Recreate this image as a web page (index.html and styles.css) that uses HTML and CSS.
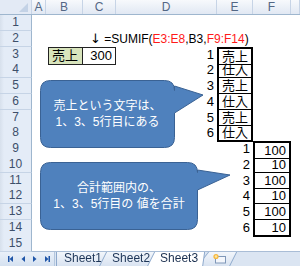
FILE: index.html
```html
<!DOCTYPE html>
<html>
<head>
<meta charset="utf-8">
<title>SUMIF</title>
<link rel="stylesheet" href="styles.css">
</head>
<body>
<div class="sheet">
  <div class="row head">
    <div class="corner"></div><div>A</div><div>B</div><div>C</div><div>D</div><div>E</div><div>F</div><div></div>
  </div>
  <div class="row"><div class="rh">1</div><div></div><div></div><div></div><div></div><div></div><div></div><div></div></div>
  <div class="row"><div class="rh">2</div><div></div><div></div>
    <div class="c formula"><span class="arrow">&#x2193;</span> =SUMIF(<span class="red">E3:E8</span>,B3,<span class="red">F9:F14</span>)</div>
    <div></div><div></div><div></div><div></div></div>
  <div class="row"><div class="rh">3</div><div></div><div class="c key">売上</div><div class="c r val">300</div><div class="c r">1</div><div class="c eb top">売上</div><div></div><div></div></div>
  <div class="row"><div class="rh">4</div><div></div><div></div><div></div><div class="c r">2</div><div class="c eb">仕入</div><div></div><div></div></div>
  <div class="row"><div class="rh">5</div><div></div><div></div><div></div><div class="c r">3</div><div class="c eb">売上</div><div></div><div></div></div>
  <div class="row"><div class="rh">6</div><div></div><div></div><div></div><div class="c r">4</div><div class="c eb">仕入</div><div></div><div></div></div>
  <div class="row"><div class="rh">7</div><div></div><div></div><div></div><div class="c r">5</div><div class="c eb">売上</div><div></div><div></div></div>
  <div class="row"><div class="rh">8</div><div></div><div></div><div></div><div class="c r">6</div><div class="c eb bot">仕入</div><div></div><div></div></div>
  <div class="row"><div class="rh">9</div><div></div><div></div><div></div><div></div><div class="c r">1</div><div class="c r eb top">100</div><div></div></div>
  <div class="row"><div class="rh">10</div><div></div><div></div><div></div><div></div><div class="c r">2</div><div class="c r eb">10</div><div></div></div>
  <div class="row"><div class="rh">11</div><div></div><div></div><div></div><div></div><div class="c r">3</div><div class="c r eb">100</div><div></div></div>
  <div class="row"><div class="rh">12</div><div></div><div></div><div></div><div></div><div class="c r">4</div><div class="c r eb">10</div><div></div></div>
  <div class="row"><div class="rh">13</div><div></div><div></div><div></div><div></div><div class="c r">5</div><div class="c r eb">100</div><div></div></div>
  <div class="row"><div class="rh">14</div><div></div><div></div><div></div><div></div><div class="c r">6</div><div class="c r eb bot">10</div><div></div></div>
  <div class="row"><div class="rh">15</div><div></div><div></div><div></div><div></div><div></div><div></div><div></div></div>

  <div class="callout c1">
    <svg class="bubble" width="170" height="72" viewBox="0 0 170 72">
      <path d="M10.5,0.5 H124.5 Q134.5,0.5 134.5,10.5 V6 L163,15 L134.5,33 V57.5 Q134.5,67.5 124.5,67.5 H10.5 Q0.5,67.5 0.5,57.5 V10.5 Q0.5,0.5 10.5,0.5 Z"/>
    </svg>
    <div class="say">売上という文字は、<br>1、3、5行目にある</div>
  </div>
  <div class="callout c2">
    <svg class="bubble" width="195" height="72" viewBox="0 0 195 72">
      <path d="M10.5,0.5 H147.5 Q157.5,0.5 157.5,10.5 V8 L190,13 L157.5,28 V57.5 Q157.5,67.5 147.5,67.5 H10.5 Q0.5,67.5 0.5,57.5 V10.5 Q0.5,0.5 10.5,0.5 Z"/>
    </svg>
    <div class="say">合計範囲内の、<br>1、3、5行目の 値を合計</div>
  </div>
</div>

<div class="tabbar">
  <div class="nav">
    <svg width="55" height="14" viewBox="0 0 55 14">
      <rect x="8" y="4" width="1.5" height="6"/>
      <path d="M13,4 L9.5,7 L13,10 Z"/>
      <path d="M25,4 L21.5,7 L25,10 Z"/>
      <path d="M33,4 L36.5,7 L33,10 Z"/>
      <path d="M45,4 L48.5,7 L45,10 Z"/>
      <rect x="48.5" y="4" width="1.5" height="6"/>
    </svg>
  </div>
  <div class="tw first"><div class="tab">Sheet1</div></div>
  <div class="tw"><div class="tab">Sheet2</div></div>
  <div class="tw on"><div class="tab">Sheet3</div></div>
  <div class="tw add">
    <div class="tab">
      <svg width="16" height="11" viewBox="0 0 16 11">
        <rect x="4.5" y="3.5" width="10" height="6.5" fill="#f3f6fb" stroke="#7f97b8"/>
        <circle cx="5" cy="3.5" r="2.6" fill="#f6b73c"/>
        <circle cx="5" cy="3.5" r="1.3" fill="#fde6a3"/>
      </svg>
    </div>
  </div>
</div>
</body>
</html>
```

FILE: styles.css
```css
* {
  box-sizing: border-box;
}

body {
  margin: 0;
  width: 300px;
  height: 266px;
  overflow: hidden;
  background: #fff;
  font-family: "Liberation Sans", "Noto Sans CJK JP", sans-serif;
  font-size: 13px;
  color: #000;
}

.sheet {
  position: relative;
  height: 251px;
}

.row {
  display: grid;
  grid-template-columns: 32px 14px 37px 33px 101px 36px 38px 9px;
  height: 15.75px;
  line-height: 15px;
}

.row.head {
  height: 15px;
  line-height: 14px;
  background: linear-gradient(#f7f9fc, #e1e8f3);
  border-bottom: 1px solid #9eb6ce;
  color: #536785;
  font-size: 12px;
  text-align: center;
}

.row.head div {
  border-right: 1px solid #c7d4e6;
}

.corner {
  position: relative;
  background: #e3eaf5;
}

.corner::after {
  content: "";
  position: absolute;
  right: 3px;
  bottom: 2px;
  border-left: 9px solid transparent;
  border-bottom: 9px solid #c3d2e6;
}

.rh {
  background: linear-gradient(90deg, #d7e0ec 0, #e4ecf7 4px);
  border-right: 1px solid #9eb6ce;
  border-bottom: 1px solid #c6d4e6;
  color: #3d4f6a;
  font-size: 12px;
  text-align: center;
}

.c {
  padding: 0 3px;
  white-space: nowrap;
}

.r {
  text-align: right;
}

.formula {
  padding-left: 7px;
  font-size: 12px;
}

.arrow {
  font-family: "DejaVu Sans", sans-serif;
  font-size: 13px;
  color: #000;
}

.red {
  color: #ff1a1a;
}

.key {
  margin-left: 2px;
  background: #d8e4bc;
  border: 1px solid #222;
}

.val {
  border: 1px solid #222;
  border-left: none;
}

.eb {
  border-left: 2px solid #000;
  border-right: 2px solid #000;
  border-bottom: 1px solid #000;
}

.eb.top {
  border-top: 2px solid #000;
}

.eb.bot {
  border-bottom: 2px solid #000;
}

/* speech bubbles lie over the grid */
.callout {
  position: absolute;
  left: 40px;
  height: 68px;
  display: flex;
  align-items: center;
  justify-content: center;
}

.c1 {
  top: 80px;
  width: 135px;
}

.c2 {
  top: 162px;
  width: 158px;
}

.bubble {
  position: absolute;
  left: 0;
  top: 0;
  overflow: visible;
}

.bubble path {
  fill: #4f81bd;
  stroke: #3a6294;
  stroke-width: 1;
}

.say {
  position: relative;
  color: #fff;
  font-size: 12px;
  line-height: 16px;
  text-align: center;
}

.tabbar {
  display: flex;
  height: 15px;
  background: #dbe5f2;
  border-top: 1px solid #a9bdd6;
}

.nav {
  width: 55px;
  border-right: 1px solid #b3c6de;
  background: linear-gradient(#e9f0f9, #d5e1f0);
}

.nav svg {
  display: block;
  fill: #1f55a8;
}

.tw {
  filter: drop-shadow(1px 0 0 #8ea9cc) drop-shadow(-1px 0 0 #8ea9cc);
  margin-left: -8px;
}

.tw.first {
  margin-left: 2px;
}

.tab {
  height: 14px;
  padding: 0 6px 0 12px;
  line-height: 13px;
  font-size: 12px;
  color: #1d3557;
  background: linear-gradient(#f2f6fb, #d9e3f1);
  clip-path: polygon(7px 0, 100% 0, calc(100% - 2px) 100%, 0 100%);
}

.first .tab {
  padding-left: 7px;
  clip-path: polygon(0 0, 100% 0, calc(100% - 2px) 100%, 0 100%);
}

.on {
  position: relative;
  z-index: 2;
}

.on .tab {
  background: #fff;
  color: #1a2f4f;
}

.add {
  margin-left: -6px;
}

.add .tab {
  width: 38px;
  padding: 1px 0 0 13px;
  clip-path: polygon(11px 0, 100% 0, calc(100% - 7px) 100%, 0 100%);
}

.add svg {
  display: block;
}
```
